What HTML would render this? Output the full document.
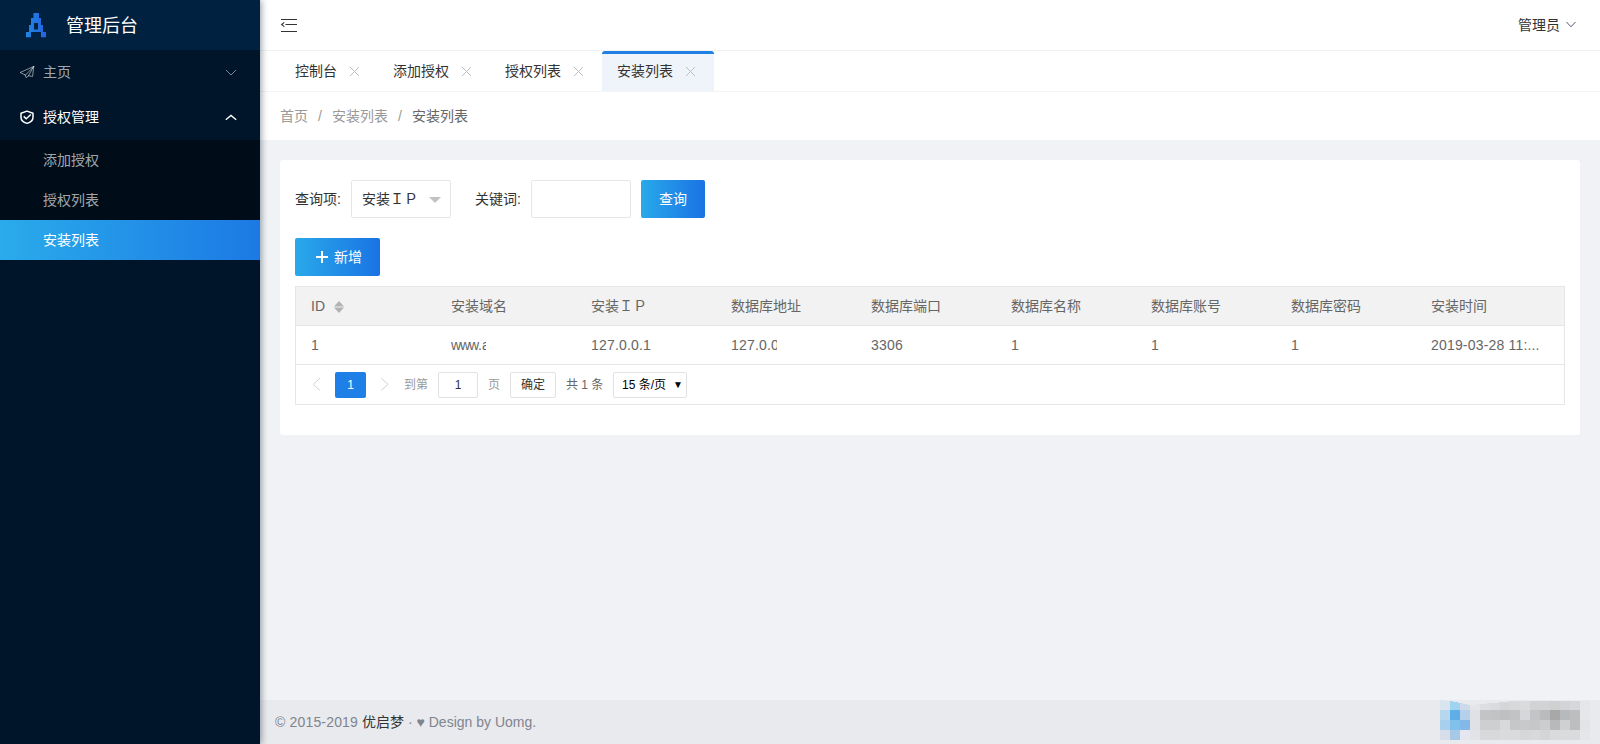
<!DOCTYPE html>
<html lang="zh-CN">
<head>
<meta charset="utf-8">
<title>管理后台</title>
<style>
*{box-sizing:border-box;margin:0;padding:0}
html,body{width:1600px;height:744px;overflow:hidden}
body{font-family:"Liberation Sans","Noto Sans CJK SC",sans-serif;font-size:14px;color:#515a6e;background:#f0f2f5;position:relative}
.abs{position:absolute}
/* sidebar */
#side{position:absolute;left:0;top:0;width:260px;height:744px;background:#001529;box-shadow:2px 0 6px rgba(0,21,41,.35);z-index:5}
#logo{position:absolute;left:0;top:0;width:260px;height:50px;background:#002140}
#logo .t{position:absolute;left:66px;top:1px;line-height:50px;font-size:18px;color:#fff;white-space:nowrap}
.mi{position:absolute;left:0;width:260px;height:44px;line-height:44px;color:rgba(255,255,255,.65);font-size:14px}
.mi .t{position:absolute;left:43px;top:0;white-space:nowrap}
.mi.on{color:#fff}
#sub{position:absolute;left:0;top:140px;width:260px;height:120px;background:#000c17}
.si{position:absolute;left:0;width:260px;height:40px;line-height:40px;color:rgba(255,255,255,.65)}
.si .t{position:absolute;left:43px;top:0;white-space:nowrap}
.si.on{color:#fff;background:linear-gradient(90deg,#2aabeb 0%,#1c79e4 100%)}
/* header */
#head{position:absolute;left:260px;top:0;width:1340px;height:51px;background:#fff;border-bottom:1px solid #f1f2f4}
#tabs{position:absolute;left:260px;top:51px;width:1340px;height:41px;background:#fff;border-bottom:1px solid #f3f4f6}
.tab{position:absolute;top:0;height:40px;line-height:40px;color:#333;font-size:14px;white-space:nowrap}
.tab.on{background:#eff4fb;border-top:3px solid #1e80e4;line-height:34px;border-radius:3px 3px 0 0}
.tab .t{position:absolute;left:15px;top:0}
.tab svg{position:absolute;top:15px}
.tab.on svg{top:12px}
#crumb{position:absolute;left:260px;top:92px;width:1340px;height:48px;background:#fff;line-height:48px;color:#999;font-size:14px;white-space:nowrap}
#crumb span{position:absolute;top:0}
#card{position:absolute;left:280px;top:160px;width:1300px;height:275px;background:#fff;border-radius:3px}
#foot{position:absolute;left:260px;top:700px;width:1340px;height:44px;background:#e9eaee;line-height:44px;color:#80848f;font-size:14px;white-space:nowrap}

#card .lbl{position:absolute;top:20px;line-height:38px;color:#333;white-space:nowrap}
.inp{position:absolute;top:20px;height:38px;border:1px solid #e6e6e6;border-radius:2px;background:#fff}
.btn{position:absolute;height:38px;line-height:38px;color:#fff;border-radius:2px;background:linear-gradient(90deg,#29a9ea 0%,#1a73e4 100%);white-space:nowrap;text-align:center}
#tbl{position:absolute;left:15px;top:126px;width:1270px;height:119px;border:1px solid #e6e6e6}
#th{position:absolute;left:0;top:0;width:1268px;height:39px;background:#f2f2f2;border-bottom:1px solid #e6e6e6;color:#666}
#tr{position:absolute;left:0;top:39px;width:1268px;height:39px;border-bottom:1px solid #e6e6e6;color:#666;letter-spacing:.18px}
#th span,#tr span{position:absolute;top:0;line-height:38px;white-space:nowrap}
#pg{position:absolute;left:0;top:78px;width:1268px;height:39px;font-size:12px;color:#666}
#pg>*{position:absolute;top:7px;height:26px;line-height:26px;white-space:nowrap}
#pg .bx{border:1px solid #e2e2e2;border-radius:2px;background:#fff;text-align:center;color:#333}
</style>
</head>
<body>
<div id="side">
  <div id="logo">
    <svg class="abs" style="left:24px;top:11px" width="24" height="28" viewBox="24 11 24 28">
      <defs><linearGradient id="lg" x1="0" x2="1" y1="0" y2="0"><stop offset="0" stop-color="#1e86e2"/><stop offset="1" stop-color="#2563e0"/></linearGradient></defs>
      <path fill="url(#lg)" d="M33.5 13h5.5v5h2v7h2v7h3v5.3h-5v-5.3h-10v5.3h-5v-5.3h3v-7h2v-7h2.5z"/>
      <rect x="34" y="23" width="4" height="6.5" fill="#002140"/>
    </svg>
    <div class="t">管理后台</div>
  </div>
  <div class="mi" style="top:50px"><div class="t">主页</div></div>
  <div class="mi on" style="top:95px"><div class="t">授权管理</div></div>

  <svg class="abs" style="left:0;top:50px" width="260" height="90" viewBox="0 50 260 90" fill="none">
    <g stroke="rgba(255,255,255,.62)" stroke-width="0.85" stroke-linejoin="round" stroke-linecap="round">
      <path d="M33.6 66.5L20.1 72.5L25.1 74.9Z M25.1 74.9L26.1 77.6L28.5 75.8 M33.6 66.5L28.5 75.8L32.2 76.4Z"/>
    </g>
    <path d="M226 70L231 75L236 70" stroke="rgba(255,255,255,.55)" stroke-width="0.9"/>
    <path d="M27 111.1L33 113.2V117.2C33 120.3 30.3 122.5 27 123.4C23.7 122.5 21 120.3 21 117.2V113.2Z" stroke="#fff" stroke-width="1.5" stroke-linejoin="round"/>
    <path d="M23.7 116.4L26.2 118.8L30.8 114.5" stroke="#fff" stroke-width="1.5"/>
    <path d="M225.8 119.7L231 115.5L236.2 119.7" stroke="#fff" stroke-width="1.4"/>
  </svg>
  <div id="sub">
    <div class="si" style="top:0"><div class="t">添加授权</div></div>
    <div class="si" style="top:40px"><div class="t">授权列表</div></div>
    <div class="si on" style="top:80px"><div class="t">安装列表</div></div>
  </div>
</div>
<div id="head">
  <svg class="abs" style="left:20px;top:18px" width="18" height="15" viewBox="280 18 18 15" fill="none" stroke="#333" stroke-width="1">
    <path d="M281 19.5H297 M285.5 24.5H297 M281 31.5H297"/>
    <path d="M284.3 22.4L281.6 24.5L284.3 26.6" stroke-width="1.1"/>
  </svg>
  <div class="abs" style="left:1258px;top:0;line-height:50px;font-size:14px;color:#333;white-space:nowrap">管理员</div>
  <svg class="abs" style="left:1304px;top:19px" width="14" height="11" viewBox="1564 19 14 11" fill="none" stroke="#515a6e" stroke-width="1"><path d="M1566.5 22L1571 26.8L1575.5 22"/></svg>
</div>
<div id="tabs">
  <div class="tab" style="left:20px;width:98px"><span class="t">控制台</span><svg style="left:69px" width="11" height="11" viewBox="0 0 11 11" fill="none" stroke="#b9bdc6" stroke-width="1"><path d="M1 1L10 10M10 1L1 10"/></svg></div>
  <div class="tab" style="left:118px;width:112px"><span class="t">添加授权</span><svg style="left:83px" width="11" height="11" viewBox="0 0 11 11" fill="none" stroke="#b9bdc6" stroke-width="1"><path d="M1 1L10 10M10 1L1 10"/></svg></div>
  <div class="tab" style="left:230px;width:112px"><span class="t">授权列表</span><svg style="left:83px" width="11" height="11" viewBox="0 0 11 11" fill="none" stroke="#b9bdc6" stroke-width="1"><path d="M1 1L10 10M10 1L1 10"/></svg></div>
  <div class="tab on" style="left:342px;width:112px"><span class="t">安装列表</span><svg style="left:83px" width="11" height="11" viewBox="0 0 11 11" fill="none" stroke="#b9bdc6" stroke-width="1"><path d="M1 1L10 10M10 1L1 10"/></svg></div>
</div>
<div id="crumb">
  <span style="left:20px">首页</span><span style="left:58px">/</span>
  <span style="left:72px">安装列表</span><span style="left:138px">/</span>
  <span style="left:152px;color:#666">安装列表</span>
</div>
<div id="card">
  <div class="lbl" style="left:15px">查询项:</div>
  <div class="inp" style="left:71px;width:100px"><span class="abs" style="left:10px;top:0;line-height:36px;color:#333;white-space:nowrap">安装ＩＰ</span>
    <span class="abs" style="left:77px;top:16px;width:0;height:0;border:6px solid transparent;border-top-color:#c2c2c2"></span></div>
  <div class="lbl" style="left:195px">关键词:</div>
  <div class="inp" style="left:251px;width:100px"></div>
  <div class="btn" style="left:361px;top:20px;width:64px">查询</div>
  <div class="btn" style="left:15px;top:78px;width:85px"><svg class="abs" style="left:20px;top:12px" width="14" height="14" viewBox="0 0 14 14" stroke="#fff" stroke-width="2" fill="none"><path d="M7 1V13M1 7H13"/></svg><span class="abs" style="left:39px;top:0">新增</span></div>
  <div id="tbl">
    <div id="th"><span style="left:15px">ID</span><span style="left:155px">安装域名</span><span style="left:295px">安装ＩＰ</span><span style="left:435px">数据库地址</span><span style="left:575px">数据库端口</span><span style="left:715px">数据库名称</span><span style="left:855px">数据库账号</span><span style="left:995px">数据库密码</span><span style="left:1135px">安装时间</span><svg class="abs" style="left:38px;top:14px" width="10" height="12" viewBox="0 0 10 12"><path d="M0 5.4L5 0L10 5.4Z M0 6.6L5 12L10 6.6Z" fill="#b2b2b2"/></svg></div>
    <div id="tr"><span style="left:15px">1</span><span style="left:155px"><i style="display:inline-block;font-style:normal;width:34.5px;overflow:hidden;vertical-align:top"><b style="font-weight:normal;letter-spacing:-1.1px">www</b>.a</i></span><span style="left:295px">127.0.0.1</span><span style="left:435px"><i style="display:inline-block;font-style:normal;width:46px;overflow:hidden;vertical-align:top">127.0.0</i></span><span style="left:575px">3306</span><span style="left:715px">1</span><span style="left:855px">1</span><span style="left:995px">1</span><span style="left:1135px">2019-03-28 11:...</span></div>
    <div id="pg">
      <svg style="left:16px;top:12px;height:15px" width="10" height="15" viewBox="0 0 10 15" fill="none" stroke="#d2d2d2" stroke-width="1"><path d="M8 1.2L1.2 7.3L8 13.4"/></svg>
      <div style="left:39px;width:31px;background:#1e80e6;color:#fff;text-align:center;border-radius:2px">1</div>
      <svg style="left:84px;top:12px;height:15px" width="10" height="15" viewBox="0 0 10 15" fill="none" stroke="#d2d2d2" stroke-width="1"><path d="M1.2 1.2L8 7.3L1.2 13.4"/></svg>
      <div style="left:108px;color:#999">到第</div>
      <div class="bx" style="left:142px;width:40px;line-height:25px">1</div>
      <div style="left:192px;color:#999">页</div>
      <div class="bx" style="left:214px;width:46px;line-height:25px">确定</div>
      <div style="left:270px">共 1 条</div>
      <div class="bx" style="left:317px;width:74px;line-height:25px;color:#000;text-align:left;padding-left:8px">15 条/页<span style="position:absolute;left:59px;top:-1px;font-size:10px">▼</span></div>
    </div>
  </div>
</div>
<div id="foot"><span style="position:absolute;left:15px;top:0"><span style="letter-spacing:.17px">© 2015-2019 </span><span style="color:#333">优启梦</span> · ♥ Design by Uomg.</span></div>
<svg class="abs" style="left:1440px;top:700px" width="150" height="40" viewBox="0 0 150 40" shape-rendering="crispEdges"><rect x="0" y="0" width="10" height="10" fill="#D8E4EE"/><rect x="10" y="0" width="10" height="10" fill="#A0D3F0"/><rect x="20" y="0" width="10" height="10" fill="#CCDAEC"/><rect x="30" y="0" width="10" height="10" fill="#E4E5E9"/><rect x="40" y="0" width="10" height="10" fill="#DDDEE2"/><rect x="50" y="0" width="10" height="10" fill="#DADBDE"/><rect x="60" y="0" width="10" height="10" fill="#D5D6D8"/><rect x="70" y="0" width="10" height="10" fill="#D8D9DB"/><rect x="80" y="0" width="10" height="10" fill="#DADBDD"/><rect x="90" y="0" width="10" height="10" fill="#D2D3D5"/><rect x="100" y="0" width="10" height="10" fill="#D2D3D5"/><rect x="110" y="0" width="10" height="10" fill="#CFD0D2"/><rect x="120" y="0" width="10" height="10" fill="#D3D4D7"/><rect x="130" y="0" width="10" height="10" fill="#D6D7DA"/><rect x="140" y="0" width="10" height="10" fill="#E5E6E9"/><rect x="0" y="10" width="10" height="10" fill="#B5D8EE"/><rect x="10" y="10" width="10" height="10" fill="#5FAEE8"/><rect x="20" y="10" width="10" height="10" fill="#B5D0EA"/><rect x="30" y="10" width="10" height="10" fill="#E0E1E5"/><rect x="40" y="10" width="10" height="10" fill="#C3C4C6"/><rect x="50" y="10" width="10" height="10" fill="#C2C3C5"/><rect x="60" y="10" width="10" height="10" fill="#BFC0C2"/><rect x="70" y="10" width="10" height="10" fill="#C2C3C5"/><rect x="80" y="10" width="10" height="10" fill="#D6D7DA"/><rect x="90" y="10" width="10" height="10" fill="#C3C4C6"/><rect x="100" y="10" width="10" height="10" fill="#BABBBD"/><rect x="110" y="10" width="10" height="10" fill="#A8A8A8"/><rect x="120" y="10" width="10" height="10" fill="#B8B9BB"/><rect x="130" y="10" width="10" height="10" fill="#BDBEC0"/><rect x="140" y="10" width="10" height="10" fill="#E6E7EA"/><rect x="0" y="20" width="10" height="10" fill="#A8D0EC"/><rect x="10" y="20" width="10" height="10" fill="#82C0EC"/><rect x="20" y="20" width="10" height="10" fill="#84B8E8"/><rect x="30" y="20" width="10" height="10" fill="#E0E1E5"/><rect x="40" y="20" width="10" height="10" fill="#CECFD1"/><rect x="50" y="20" width="10" height="10" fill="#CECFD1"/><rect x="60" y="20" width="10" height="10" fill="#D8D9DB"/><rect x="70" y="20" width="10" height="10" fill="#C6C7C9"/><rect x="80" y="20" width="10" height="10" fill="#C8C9CB"/><rect x="90" y="20" width="10" height="10" fill="#C6C7C9"/><rect x="100" y="20" width="10" height="10" fill="#CCCDCF"/><rect x="110" y="20" width="10" height="10" fill="#B8B9BB"/><rect x="120" y="20" width="10" height="10" fill="#CFD0D2"/><rect x="130" y="20" width="10" height="10" fill="#BDBEC0"/><rect x="140" y="20" width="10" height="10" fill="#E3E4E7"/><rect x="0" y="30" width="10" height="10" fill="#D8DEE9"/><rect x="10" y="30" width="10" height="10" fill="#A8C8E8"/><rect x="20" y="30" width="10" height="10" fill="#E4E7EF"/><rect x="30" y="30" width="10" height="10" fill="#E2E3E7"/><rect x="40" y="30" width="10" height="10" fill="#D8D9DB"/><rect x="50" y="30" width="10" height="10" fill="#D8D9DB"/><rect x="60" y="30" width="10" height="10" fill="#DADBDD"/><rect x="70" y="30" width="10" height="10" fill="#DADBDD"/><rect x="80" y="30" width="10" height="10" fill="#D6D7D9"/><rect x="90" y="30" width="10" height="10" fill="#D8D9DB"/><rect x="100" y="30" width="10" height="10" fill="#D4D5D7"/><rect x="110" y="30" width="10" height="10" fill="#DADBDD"/><rect x="120" y="30" width="10" height="10" fill="#DADBDD"/><rect x="130" y="30" width="10" height="10" fill="#DADBDD"/><rect x="140" y="30" width="10" height="10" fill="#E5E6E9"/><path d="M0 0H150V0.5H80L30 5L10 1L0 0Z" fill="#e9eaee"/></svg>
</body>
</html>
